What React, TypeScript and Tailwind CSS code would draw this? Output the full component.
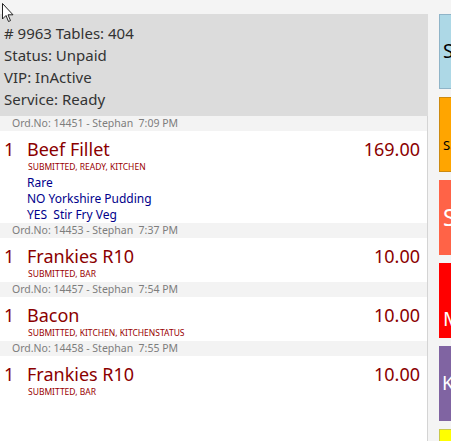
import React from "react"

type Item = {
  ord: string
  qty: number
  name: string
  price: string
  status: string
  mods?: string[]
}

const items: Item[] = [
  {
    ord: "Ord.No: 14451 - Stephan  7:09 PM",
    qty: 1,
    name: "Beef Fillet",
    price: "169.00",
    status: "Submitted, Ready, Kitchen",
    mods: ["Rare", "NO Yorkshire Pudding", "YES  Stir Fry Veg"],
  },
  { ord: "Ord.No: 14453 - Stephan  7:37 PM", qty: 1, name: "Frankies R10", price: "10.00", status: "Submitted, Bar" },
  { ord: "Ord.No: 14457 - Stephan  7:54 PM", qty: 1, name: "Bacon", price: "10.00", status: "Submitted, Kitchen, KitchenStatus" },
  { ord: "Ord.No: 14458 - Stephan  7:55 PM", qty: 1, name: "Frankies R10", price: "10.00", status: "Submitted, Bar" },
]

const OrderRow = ({ item }: { item: Item }) => {
  return (
    <div>
      <div className="h-[15px] bg-[#f3f3f3] pl-3 text-[10.5px] leading-[15px] text-[#7d7d7d] whitespace-pre">
        {item.ord}
      </div>
      <div className={item.mods ? "pt-1.5" : "pt-1.5 pb-0.5"}>
        <div className="flex items-center justify-between pl-1 pr-[7px] text-[18px] leading-[24px] text-[#8b0000]">
          <div className="flex">
            <span className="w-[23px]">{item.qty}</span>
            <span>{item.name}</span>
          </div>
          <span>{item.price}</span>
        </div>
        <div className="pl-[28px] text-[8.5px] leading-[12px] uppercase text-[#990000]">{item.status}</div>
        {item.mods && (
          <div className="pl-[27px] pt-0.5 text-[12px] leading-4 text-[#00008b] whitespace-pre">
            {item.mods.map((m) => (
              <div key={m}>{m}</div>
            ))}
          </div>
        )}
      </div>
    </div>
  )
}

export default function App() {
  return (
    <div className="relative w-[451px] h-[441px] overflow-hidden bg-[#f4f4f4] pt-[14px] flex font-['Noto_Sans',sans-serif]">
      {/* order panel */}
      <div className="w-[428px] shrink-0 flex flex-col">
        <div className="bg-[#dcdcdc] pt-2 pb-1.5 px-1 text-[15px] leading-[22px] text-[#333333]">
          <div># 9963 Tables: 404</div>
          <div>Status: Unpaid</div>
          <div>VIP: InActive</div>
          <div>Service: Ready</div>
        </div>
        <div className="flex-1 bg-white border-r border-[#d4d4d4]">
          {items.map((it) => (
            <OrderRow key={it.ord} item={it} />
          ))}
        </div>
      </div>

      {/* action tiles */}
      <div className="ml-[11px] flex flex-col gap-2 shrink-0">
        <div className="w-[70px] h-[75px] shrink-0 bg-[#add8e6] border border-[#8fb4c8] flex items-center pl-[3px] text-[19px] text-black">
          Split
        </div>
        <div className="w-[70px] h-[75px] shrink-0 bg-[#ffa500] border border-[#cc8a10] flex flex-col justify-center pl-[3px] text-black">
          <div className="h-[20px] pl-[10px] text-[11px] leading-[20px] text-[#c0392b]">·</div>
          <div className="text-[13px] leading-[20px]">Save</div>
        </div>
        <div className="w-[70px] h-[75px] shrink-0 bg-[#ff6347] flex items-center pl-[4px] text-[23px] text-white">
          Send
        </div>
        <div className="w-[70px] h-[75px] shrink-0 bg-[#ff0000] flex flex-col justify-end pb-[6px] pl-[4px] text-[20px] leading-[26px] text-white">
          Move
        </div>
        <div className="w-[70px] h-[75px] shrink-0 bg-[#8064a2] flex items-center pl-[3px] text-[19px] text-white">
          Kitchen
        </div>
        <div className="w-[70px] h-[75px] shrink-0 bg-[#ffff00] border border-[#c8c84a]" />
      </div>

      {/* mouse pointer */}
      <svg className="absolute left-[2px] top-[3px]" width="13" height="20" viewBox="0 0 13 20">
        <path d="M0.5 0.5 L0.5 16 L4 12.5 L6.5 18.5 L8.5 17.6 L6 11.8 L11 11.8 Z" fill="white" stroke="#222" strokeWidth="1" strokeLinejoin="round" />
      </svg>
    </div>
  )
}
